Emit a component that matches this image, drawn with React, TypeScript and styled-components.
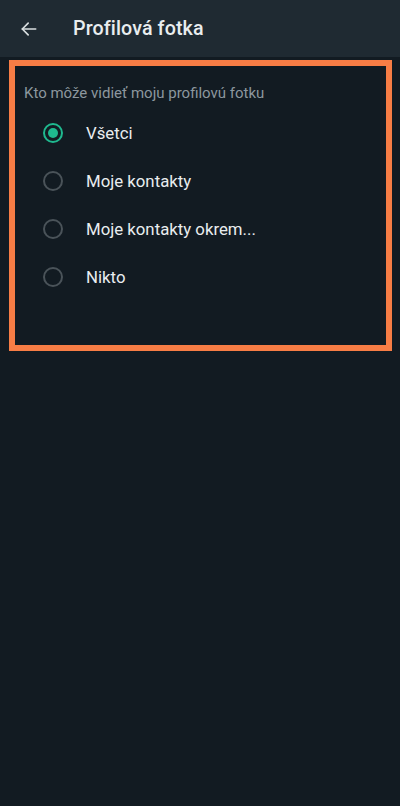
import React, { useState } from 'react';
import styled, { createGlobalStyle } from 'styled-components';

const GlobalStyle = createGlobalStyle`
  html, body {
    margin: 0;
    padding: 0;
    background: #121b22;
  }
  body {
    font-family: Roboto, "Noto Sans", "Liberation Sans", sans-serif;
    -webkit-font-smoothing: antialiased;
  }
`;

const Screen = styled.div`
  width: 400px;
  min-height: 806px;
  background: #121b22;
  display: flex;
  flex-direction: column;
`;

const Header = styled.header`
  height: 57px;
  background: #1f2a32;
  display: flex;
  align-items: center;
  padding: 0 0 0 17px;
  box-sizing: border-box;
`;

const BackButton = styled.button`
  width: 24px;
  height: 24px;
  padding: 0;
  border: none;
  background: transparent;
  color: #d9dee0;
  display: flex;
  align-items: center;
  justify-content: center;
  cursor: pointer;
  margin-right: 32px;
`;

const Title = styled.h1`
  margin: 0;
  color: #e9edef;
  font-size: 19.7px;
  font-weight: 500;
  letter-spacing: 0.1px;
`;

const Highlight = styled.section`
  margin: 3px 8px 0 9px;
  height: 291px;
  border: 6px solid #f77d45;
  box-sizing: border-box;
  padding: 18px 0 0 9px;
  display: flex;
  flex-direction: column;
`;

const SectionLabel = styled.div`
  color: #8c979e;
  font-size: 15px;
  margin-bottom: 7px;
`;

const OptionList = styled.div`
  display: flex;
  flex-direction: column;
`;

const OptionRow = styled.label`
  height: 48px;
  display: flex;
  align-items: center;
  padding-left: 19px;
  cursor: pointer;
`;

const Radio = styled.span<{ $checked: boolean }>`
  width: 20px;
  height: 20px;
  box-sizing: border-box;
  border-radius: 50%;
  border: 2px solid ${p => (p.$checked ? '#1fb98f' : '#4a5359')};
  display: flex;
  align-items: center;
  justify-content: center;
  margin-right: 23px;

  &::after {
    content: '';
    width: 10px;
    height: 10px;
    border-radius: 50%;
    background: #1fb98f;
    display: ${p => (p.$checked ? 'block' : 'none')};
  }
`;

const OptionText = styled.span`
  color: #e9edef;
  font-size: 16.8px;
`;

const options = ['Všetci', 'Moje kontakty', 'Moje kontakty okrem...', 'Nikto'];

export default function App() {
  const [selected, setSelected] = useState(0);

  return (
    <Screen>
      <GlobalStyle />
      <Header>
        <BackButton aria-label="Späť">
          <svg width="20" height="20" viewBox="0 0 24 24" fill="none" stroke="currentColor" strokeWidth="2" strokeLinecap="round" strokeLinejoin="round">
            <path d="M20 12H4" />
            <path d="M11 5l-7 7 7 7" />
          </svg>
        </BackButton>
        <Title>Profilová fotka</Title>
      </Header>
      <Highlight>
        <SectionLabel>Kto môže vidieť moju profilovú fotku</SectionLabel>
        <OptionList>
          {options.map((label, i) => (
            <OptionRow key={label} onClick={() => setSelected(i)}>
              <Radio $checked={selected === i} />
              <OptionText>{label}</OptionText>
            </OptionRow>
          ))}
        </OptionList>
      </Highlight>
    </Screen>
  );
}
